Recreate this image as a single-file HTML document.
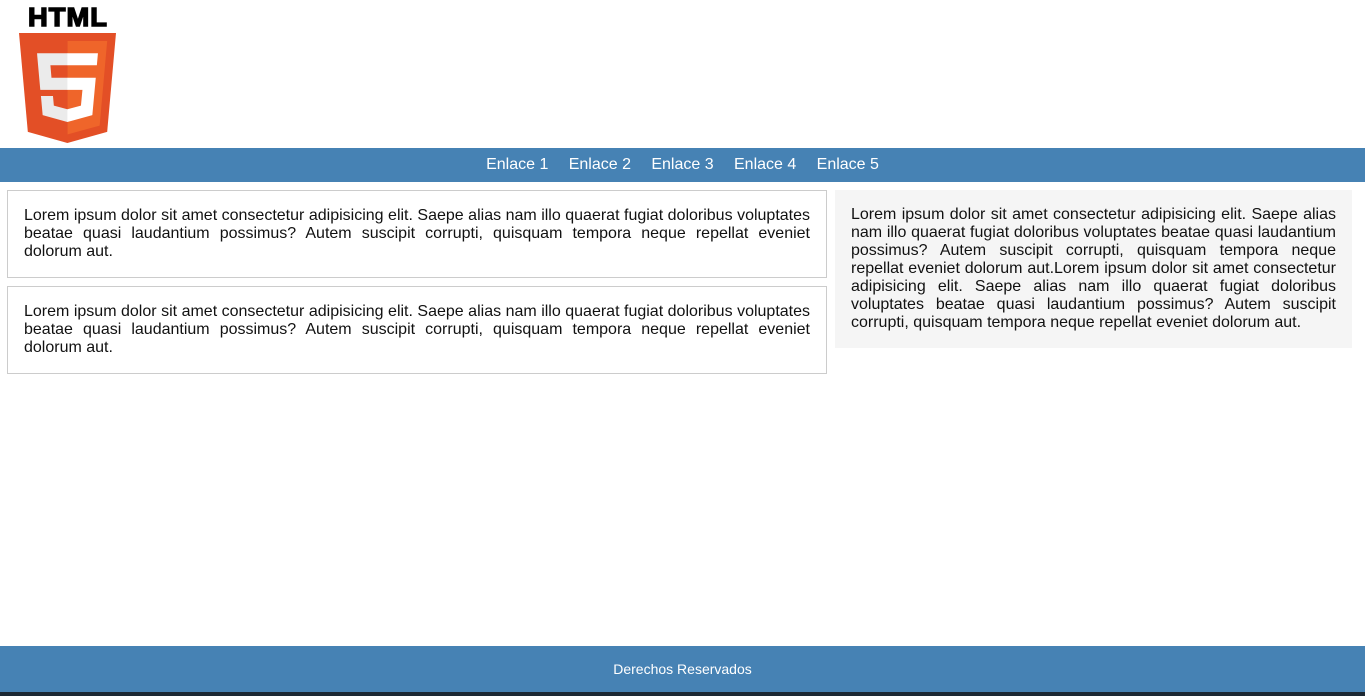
<!DOCTYPE html>
<html><head><meta charset="utf-8"><style>
*{margin:0;padding:0;box-sizing:border-box}
body{width:1365px;height:696px;position:relative;font-family:"Liberation Sans",Arial,sans-serif;background:#fff;overflow:hidden}
.logo{position:absolute;left:19px;top:33px}
.ht{position:absolute;left:28px;top:2px;font:900 26px "Liberation Sans",sans-serif;letter-spacing:1px;color:#000;-webkit-text-stroke:1.4px #000;transform:scaleX(1.05);transform-origin:left}
nav{position:absolute;top:148px;left:0;width:1365px;height:34px;background:#4682b4;text-align:center;color:#fff;font-size:16px;line-height:33px;word-spacing:0}
nav span{margin:0 10.2px}
.box{position:absolute;font-size:16px;line-height:18px;text-align:justify;color:#111}
.b1{left:7px;width:820px;border:1px solid #ccc;padding:16px 16px}
.r{left:835px;top:190px;width:517px;height:158px;background:#f5f5f5;padding:16px 16px}
footer{position:absolute;top:646px;left:0;width:1365px;height:46px;background:#4682b4;color:#fff;font-size:14px;line-height:47px;text-align:center}
.dk{position:absolute;top:692px;left:0;width:1365px;height:4px;background:#1c2833}
</style></head><body>
<div class="ht">HTML</div>
<svg class="logo" width="97" height="110" viewBox="30 0 451 512" preserveAspectRatio="none">
<path fill="#E34F26" d="M71,460L30,0H481L440,460L255,512z"/>
<path fill="#EF652A" d="M256,472L405,431L440,37H256z"/>
<path fill="#EBEBEB" d="M256,208H181L176,150H256V94H114L115,109L129,265H256z M256,355L255,355L192,338L188,293H132L140,382L255,414L256,414z"/>
<path fill="#fff" d="M255,208V265H325L318,338L255,355V414L371,382L387,208z M255,94V150H392L397,94z"/>
</svg>
<nav><span>Enlace 1</span><span>Enlace 2</span><span>Enlace 3</span><span>Enlace 4</span><span>Enlace 5</span></nav>
<div class="box b1" style="top:190px;height:88px">Lorem ipsum dolor sit amet consectetur adipisicing elit. Saepe alias nam illo quaerat fugiat doloribus voluptates beatae quasi laudantium possimus? Autem suscipit corrupti, quisquam tempora neque repellat eveniet dolorum aut.</div>
<div class="box b1" style="top:286px;height:88px">Lorem ipsum dolor sit amet consectetur adipisicing elit. Saepe alias nam illo quaerat fugiat doloribus voluptates beatae quasi laudantium possimus? Autem suscipit corrupti, quisquam tempora neque repellat eveniet dolorum aut.</div>
<div class="box r">Lorem ipsum dolor sit amet consectetur adipisicing elit. Saepe alias nam illo quaerat fugiat doloribus voluptates beatae quasi laudantium possimus? Autem suscipit corrupti, quisquam tempora neque repellat eveniet dolorum aut.Lorem ipsum dolor sit amet consectetur adipisicing elit. Saepe alias nam illo quaerat fugiat doloribus voluptates beatae quasi laudantium possimus? Autem suscipit corrupti, quisquam tempora neque repellat eveniet dolorum aut.</div>
<footer>Derechos Reservados</footer>
<div class="dk"></div>
</body></html>
